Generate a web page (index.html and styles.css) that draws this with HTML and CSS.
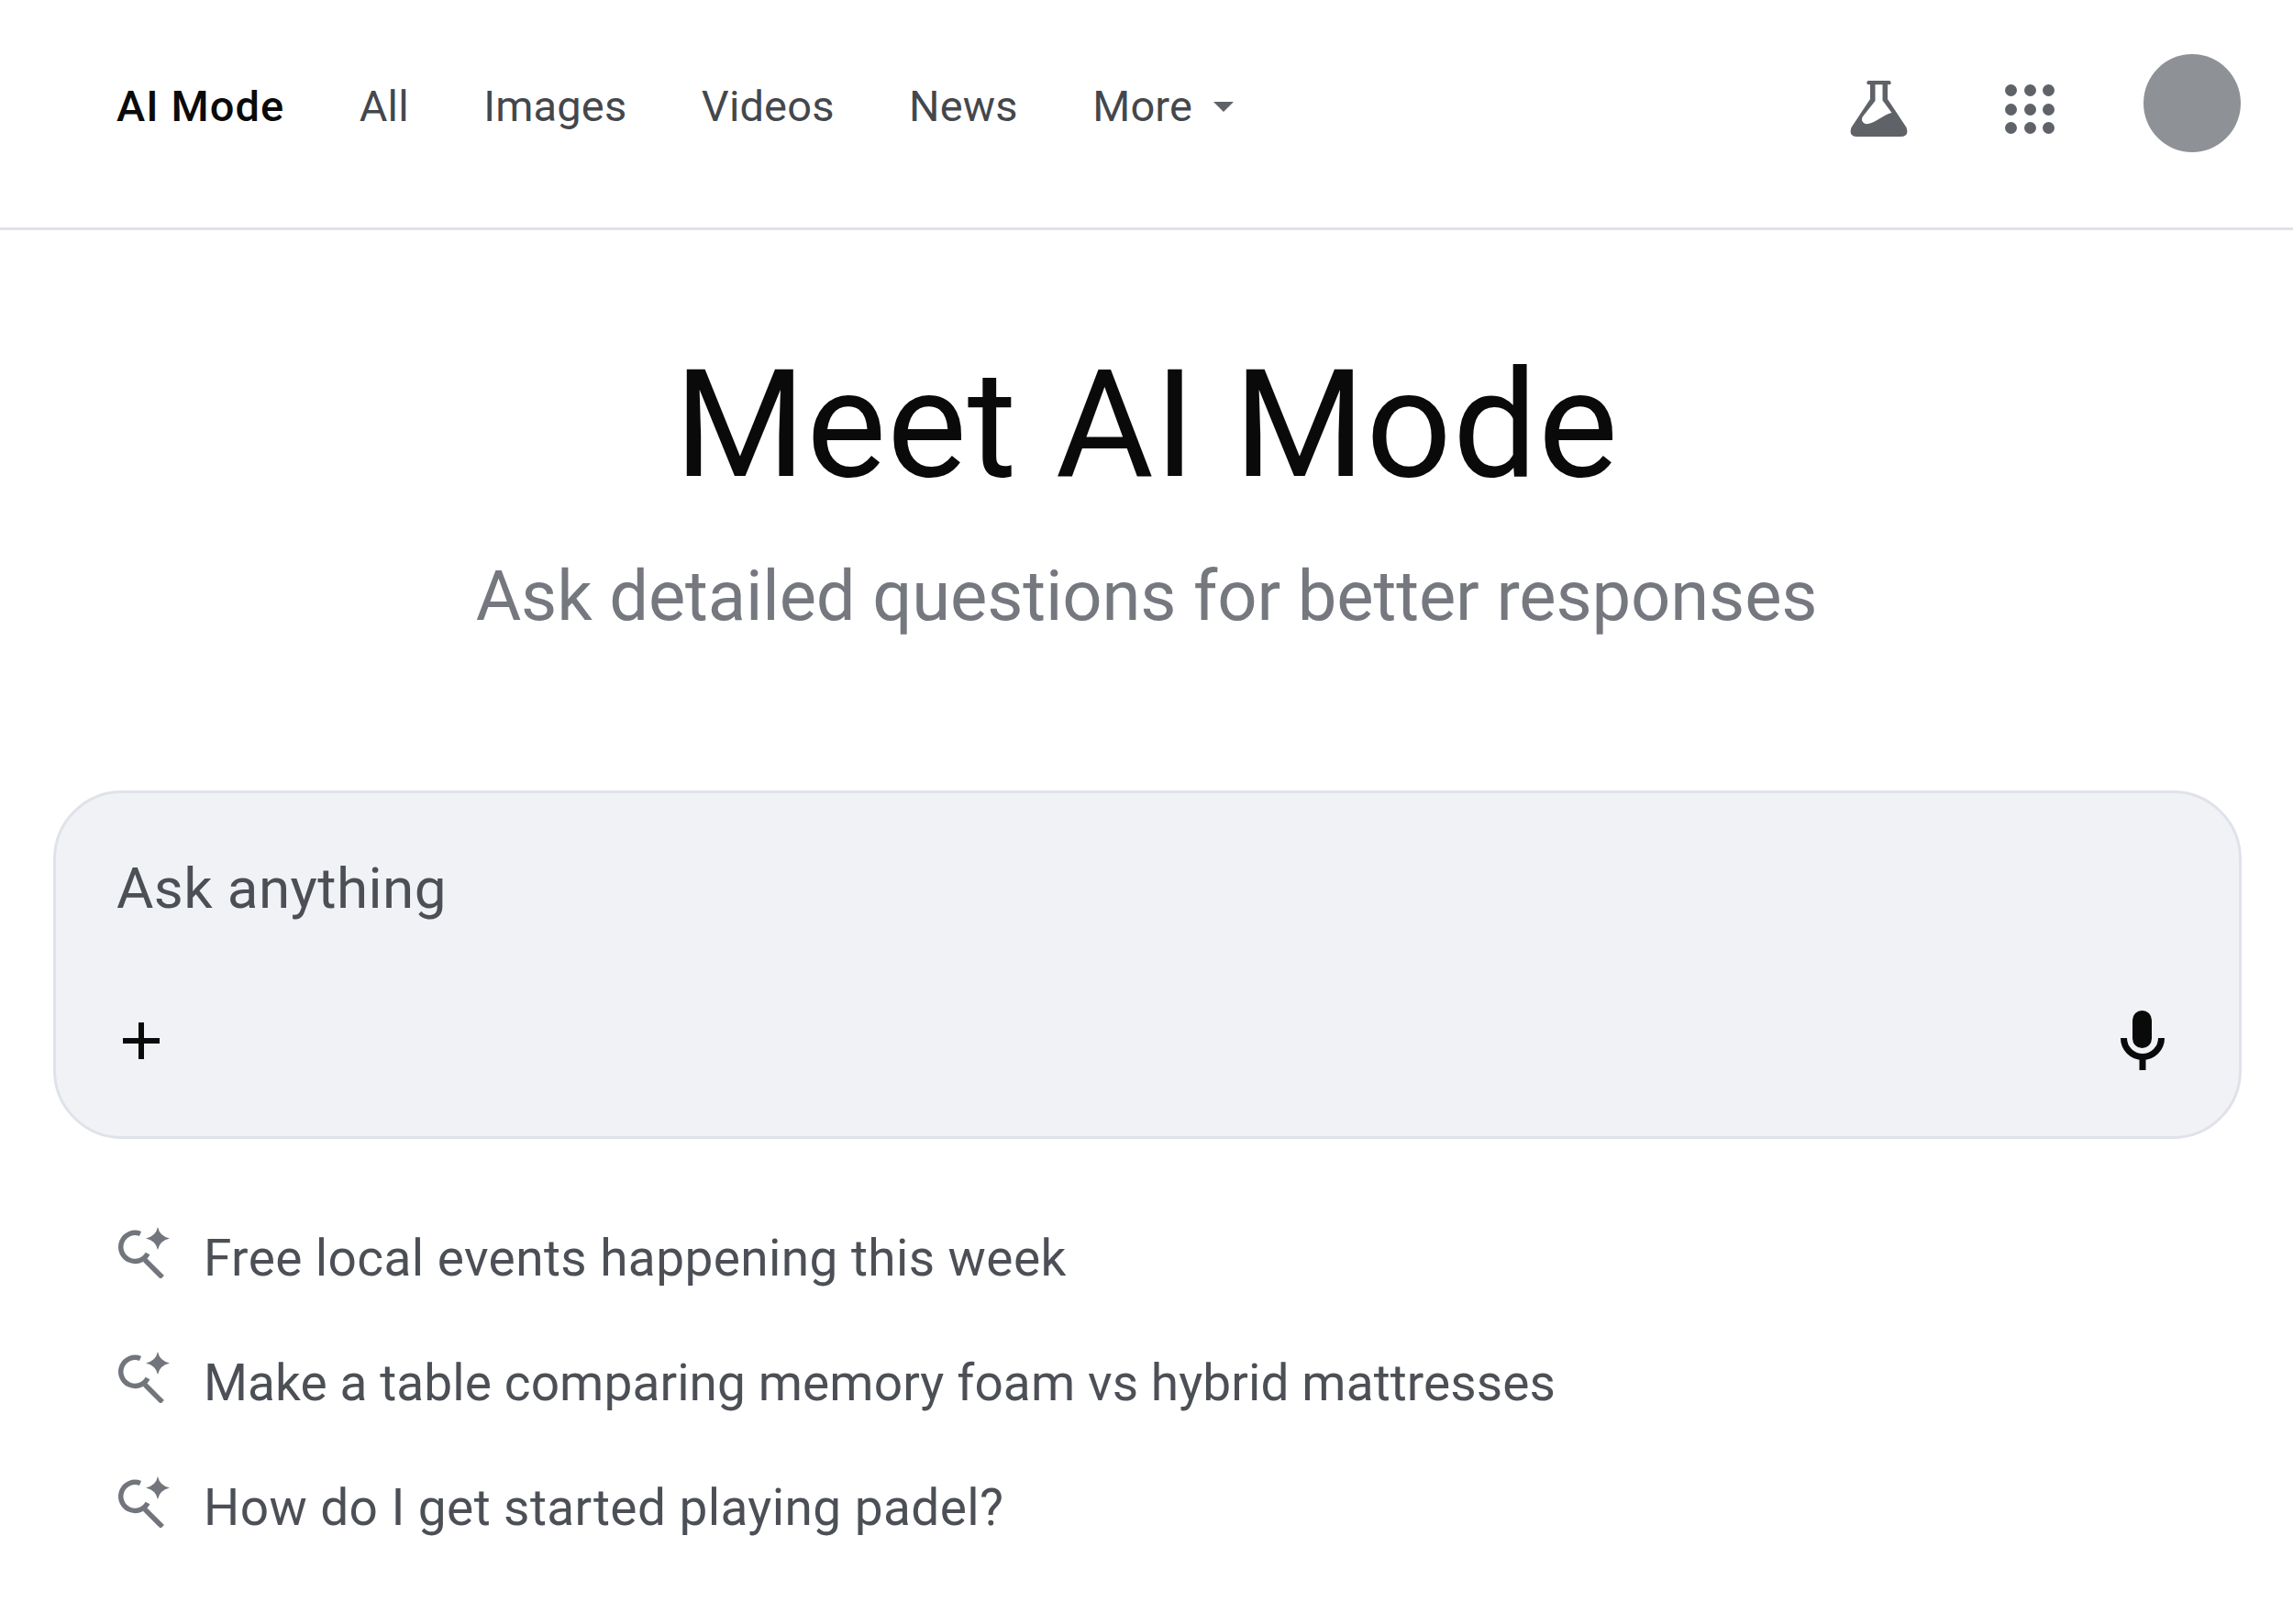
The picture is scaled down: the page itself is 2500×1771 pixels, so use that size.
FILE: index.html
```html
<!DOCTYPE html>
<html lang="en">
<head>
  <meta charset="UTF-8" />
  <title>Meet AI Mode</title>
  <link rel="stylesheet" href="styles.css">
</head>
<body>
  <header class="topbar">
    <nav class="nav">
      <a class="nav-item active">AI Mode</a>
      <a class="nav-item">All</a>
      <a class="nav-item">Images</a>
      <a class="nav-item">Videos</a>
      <a class="nav-item">News</a>
      <a class="nav-item more">More<span class="caret"></span></a>
    </nav>
    <div class="tools">
      <svg class="flask" viewBox="0 0 63 61" width="63" height="61">
        <path fill="#5f6368" fill-rule="evenodd" d="M20 0H43a2.2 2.2 0 0 1 0 4.3H41V20L61.500 51Q65 61 55 61H8Q-2 61 1.500 51L22 20V4.300H20a2.200 2.200 0 0 1 0-4.300ZM27.500 4.300H35.500V21.500L45.500 35C36 37 30 45 20 47C15 48 11 44 14 39L27.500 22Z"/>
      </svg>
      <div class="apps">
        <span></span><span></span><span></span>
        <span></span><span></span><span></span>
        <span></span><span></span><span></span>
      </div>
      <div class="avatar"></div>
    </div>
  </header>

  <main>
    <h1 class="title">Meet AI Mode</h1>
    <p class="subtitle">Ask detailed questions for better responses</p>

    <div class="searchbox">
      <div class="placeholder">Ask anything</div>
      <div class="search-actions">
        <svg class="plus" viewBox="0 0 40 40" width="40" height="40">
          <path fill="#0a0a0a" d="M17 0h6v17h17v6H23v17h-6V23H0v-6h17z"/>
        </svg>
        <svg class="mic" viewBox="0 0 48 65" width="48" height="65">
          <rect x="13" y="0" width="21" height="41" rx="10.500" fill="#0a0a0a"/>
          <path d="M3.500 30a20.500 20.500 0 0 0 41 0M24 50v15" fill="none" stroke="#0a0a0a" stroke-width="7"/>
        </svg>
      </div>
    </div>

    <ul class="suggestions">
      <li class="suggestion wide">
        <svg class="spark" viewBox="0 0 57 56" width="57" height="56"><use href="#spark-search"/></svg>
        Free local events happening this week
      </li>
      <li class="suggestion">
        <svg class="spark" viewBox="0 0 57 56" width="57" height="56"><use href="#spark-search"/></svg>
        Make a table comparing memory foam vs hybrid mattresses
      </li>
      <li class="suggestion wide">
        <svg class="spark" viewBox="0 0 57 56" width="57" height="56"><use href="#spark-search"/></svg>
        How do I get started playing padel?
      </li>
    </ul>
  </main>

  <svg class="defs" width="0" height="0">
    <symbol id="spark-search" viewBox="0 0 57 56">
      <path d="M25 7.500A15.500 15.500 0 1 0 33 29" fill="none" stroke="#72767c" stroke-width="5.500"/>
      <path d="M30 36L49 55" fill="none" stroke="#72767c" stroke-width="5.500"/>
      <path fill="#72767c" d="M44 0Q46 10 57 12.500Q46 15 44 25Q42 15 31 12.500Q42 10 44 0Z"/>
    </symbol>
  </svg>
</body>
</html>
```

FILE: styles.css
```css
html, body {
  margin: 0;
  padding: 0;
}
body {
  background: #fff;
  font-family: Roboto, "Liberation Sans", sans-serif;
  color: #4c5056;
}

.topbar {
  display: flex;
  justify-content: space-between;
  height: 248px;
  padding: 0 57px 0 127px;
  border-bottom: 3px solid #e0e2ea;
}

.nav {
  display: flex;
  align-items: flex-start;
  gap: 81.500px;
  padding-top: 89px;
}
.nav-item {
  font-size: 47px;
  line-height: 54px;
  letter-spacing: 0.15px;
  color: #44474c;
}
.nav-item.active {
  color: #0a0a0a;
  font-weight: 500;
  letter-spacing: 1.1px;
}
.more {
  display: flex;
  align-items: center;
  gap: 23px;
}
.caret {
  width: 0;
  height: 0;
  border-left: 11px solid transparent;
  border-right: 11px solid transparent;
  border-top: 11px solid #5f6368;
}

.tools {
  display: flex;
  align-items: flex-start;
}
.flask {
  margin-top: 88px;
  margin-right: 106px;
}
.apps {
  display: grid;
  grid-template-columns: repeat(3, 13px);
  gap: 7.500px;
  margin-top: 92px;
  margin-right: 97px;
}
.apps span {
  width: 13px;
  height: 13px;
  border-radius: 50%;
  background: #5f6368;
}
.avatar {
  width: 106px;
  height: 107px;
  margin-top: 59px;
  border-radius: 50%;
  background: #8e9195;
}

.title {
  margin: 130px 0 0;
  font-size: 164px;
  line-height: 164px;
  letter-spacing: 0.8px;
  font-weight: 400;
  text-align: center;
  color: #0a0a0a;
}
.subtitle {
  margin: 60px 0 0;
  font-size: 76px;
  line-height: 90px;
  letter-spacing: -0.15px;
  text-align: center;
  color: #75787e;
}

.searchbox {
  box-sizing: border-box;
  margin: 167px 56px 0 58px;
  padding: 68px 81px 71px 66px;
  height: 380px;
  background: #f0f2f6;
  border: 3px solid #e0e2ea;
  border-radius: 75px;
}
.placeholder {
  font-size: 62px;
  line-height: 72px;
  letter-spacing: 0.4px;
}
.search-actions {
  display: flex;
  justify-content: space-between;
  align-items: center;
  margin-top: 97px;
}
.plus {
  margin-left: 7px;
}

.suggestions {
  list-style: none;
  margin: 62px 0 0;
  padding: 0 0 0 128px;
}
.suggestion {
  display: flex;
  gap: 37px;
  align-items: flex-start;
  height: 136px;
  font-size: 55px;
  line-height: 136px;
  letter-spacing: 0.09px;
}
.suggestion.wide {
  letter-spacing: 0.4px;
}
.spark {
  margin-top: 34px;
}
.defs {
  position: absolute;
}
```
